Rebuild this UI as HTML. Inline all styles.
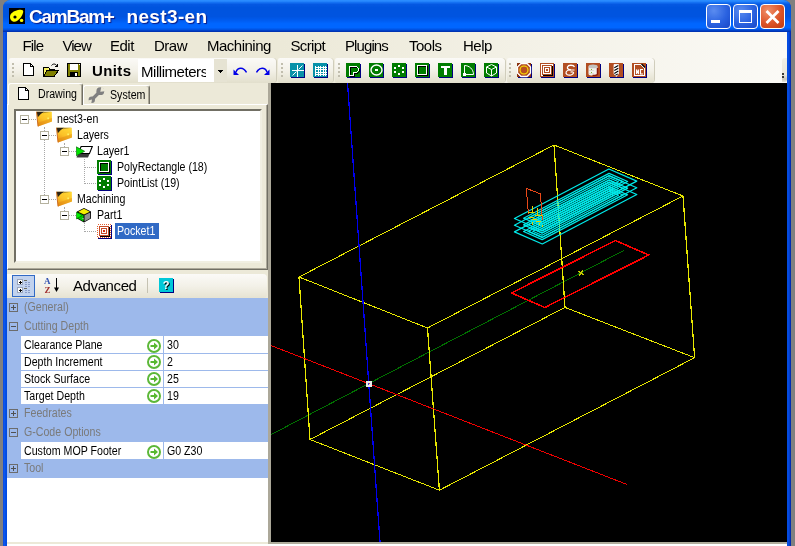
<!DOCTYPE html>
<html>
<head>
<meta charset="utf-8">
<title>CamBam+ nest3-en</title>
<style>
html,body{margin:0;padding:0;}
body{width:795px;height:546px;overflow:hidden;background:#808080;position:relative;font-family:"Liberation Sans",sans-serif;font-size:12px;color:#000;}
.abs{position:absolute;}
svg{display:block;}
#win{will-change:transform;position:absolute;left:3px;top:0;width:788px;height:546px;background:linear-gradient(to right,#0a3ad8 0,#0f5ff0 1px,#0650e6 2px,#0048e0 4px,#0048e0 784px,#0650e6 785px,#0440d0 786.500px,#0020a4 788px);border-radius:8px 8px 0 0;overflow:hidden;}
#title{position:absolute;left:0;top:0;width:788px;height:32px;
background:linear-gradient(to bottom,#2a8cff 0%,#2a8cff 3%,#1470f2 8%,#0558e2 14%,#0054de 24%,#0054e0 52%,#005cf0 64%,#0066ff 74%,#0066ff 86%,#0054e4 92%,#0038bc 97%,#002ea8 100%);}
.ttext{position:absolute;top:6px;color:#fff;font-weight:bold;font-size:19px;line-height:22px;white-space:pre;text-shadow:1px 1px 1px #0a1883;}
.cb{position:absolute;top:4px;width:25px;height:25px;border:1px solid #fff;border-radius:4px;box-sizing:border-box;background:radial-gradient(circle at 30% 25%,#5a8cf0 0%,#2a62e0 55%,#1848c8 100%);}
.cb.x{background:radial-gradient(circle at 30% 25%,#f0906a 0%,#dc5428 55%,#c03a10 100%);}
#client{position:absolute;left:4px;top:32px;width:780px;height:514px;background:#ece9d8;}
#menubar{position:absolute;left:0;top:0;width:780px;height:26px;background:linear-gradient(to right,#ece9d8 0%,#ece9d8 35%,#fbfaf6 100%);}
.mi{position:absolute;top:5px;font-size:15px;line-height:18px;letter-spacing:-0.5px;}
#tbpanel{position:absolute;left:0;top:26px;width:780px;height:25px;background:linear-gradient(to right,#ece9d8 0%,#ece9d8 35%,#fbfaf6 100%);}
.tb{position:absolute;top:0;height:25px;background:linear-gradient(to bottom,#fbfaf7 0%,#f3f1e8 50%,#e2dfcc 100%);border-radius:2px 4px 4px 2px;box-shadow:1px 0 0 #d0cdbc;}
.grip{position:absolute;top:5px;width:2px;height:16px;background:repeating-linear-gradient(to bottom,#c1beae 0,#c1beae 2px,transparent 2px,transparent 4px);}
#view{position:absolute;left:264px;top:51px;width:516px;height:459px;background:#000;overflow:hidden;}
#botline{position:absolute;left:261px;top:510px;width:519px;height:2px;background:#b0ad9c;}
#botwhite{position:absolute;left:0;top:512px;width:780px;height:2px;background:#fff;}
#split{position:absolute;left:261px;top:51px;width:3px;height:461px;background:#aca899;}
#left{position:absolute;left:0;top:51px;width:261px;height:463px;background:#ece9d8;}
/* tabs */
#tabpage{position:absolute;left:0;top:21px;width:261px;height:166px;box-sizing:border-box;border-top:1px solid #fff;border-left:1px solid #fff;border-right:1px solid #716f64;border-bottom:1px solid #716f64;box-shadow:inset -1px -1px 0 #aca899;}
.tab{position:absolute;box-sizing:border-box;border:1px solid #fff;border-right:1px solid #716f64;border-bottom:none;border-radius:3px 3px 0 0;background:#ece9d8;box-shadow:inset -1px 0 0 #aca899;}
#tree{position:absolute;left:7px;top:26px;width:248px;height:154px;box-sizing:border-box;background:#fff;border:2px solid;border-color:#716f64 #f1efe2 #f1efe2 #716f64;box-shadow:0 0 0 0 #000;}
.tt{position:absolute;height:16px;line-height:16px;white-space:nowrap;}
.ms{display:inline-block;transform:scaleX(.885);transform-origin:0 50%;white-space:nowrap;}
.ebox{position:absolute;width:9px;height:9px;}
.dv{position:absolute;width:0;border-left:1px dotted #a8a8a8;}
.dh{position:absolute;height:0;border-top:1px dotted #a8a8a8;}
/* property grid */
#pgbar{position:absolute;left:0;top:191px;width:260px;height:24px;background:linear-gradient(to bottom,#fbfaf7 0%,#f3f1e8 50%,#e6e3d2 100%);border-radius:0 4px 4px 0;}
#pg{position:absolute;left:0;top:215px;width:261px;height:244px;background:#fff;}
.cat{position:absolute;left:0;width:261px;background:#9db9eb;}
.cl{position:absolute;left:16.500px;top:0;height:19px;line-height:19px;color:#7a7a7a;white-space:nowrap;}
.pr{position:absolute;left:0;width:261px;height:17px;background:#9db9eb;}
.pn{position:absolute;left:14px;top:0;width:142px;height:16px;background:#fff;line-height:18px;padding-left:2.500px;box-sizing:border-box;white-space:nowrap;overflow:hidden;}
.pi{position:absolute;left:140px;top:1px;width:14px;height:14px;}
.pv{position:absolute;left:157px;top:0;width:104px;height:16px;background:#fff;line-height:18px;padding-left:3px;box-sizing:border-box;white-space:nowrap;}
</style>
</head>
<body>
<div id="win">
 <div id="title">
  <svg class="abs" style="left:6px;top:8px" width="16" height="16" viewBox="0 0 16 16"><rect width="16" height="16" fill="#000"/><path d="M1 9 C1 5 5 3 9 2 C13 1 15 2 14 5 C13 8 11 11 8 13 C5 15 1 13 1 9 Z" fill="#ffff00"/><circle cx="6" cy="9" r="1.600" fill="#000"/><circle cx="12.600" cy="12.400" r="1.700" fill="#ffff00"/></svg>
  <div class="ttext" style="left:26px;letter-spacing:-1.250px">CamBam+</div><div class="ttext" style="left:123.500px;letter-spacing:0.350px">nest3-en</div>
  <div class="cb" style="left:703px"><svg width="23" height="23" viewBox="0 0 23 23" shape-rendering="crispEdges"><rect x="4" y="15" width="9" height="3" fill="#fff"/></svg></div>
  <div class="cb" style="left:730px"><svg width="23" height="23" viewBox="0 0 23 23" shape-rendering="crispEdges"><path d="M5.500 6.500h12v11h-12z" fill="none" stroke="#fff" stroke-width="1"/><rect x="5" y="5" width="13" height="3" fill="#fff"/></svg></div>
  <div class="cb x" style="left:757px"><svg width="23" height="23" viewBox="0 0 23 23"><path d="M5.500 6l12 12M17.500 6l-12 12" stroke="#fff" stroke-width="2.800" fill="none"/></svg></div>
 </div>
 <div id="client">
  <div id="menubar">
   <span class="mi" style="left:15.500px;letter-spacing:-0.9px">File</span>
   <span class="mi" style="left:55.500px;letter-spacing:-1px">View</span>
   <span class="mi" style="left:103px">Edit</span>
   <span class="mi" style="left:147px">Draw</span>
   <span class="mi" style="left:200px">Machining</span>
   <span class="mi" style="left:283.500px;letter-spacing:-0.65px">Script</span>
   <span class="mi" style="left:338px;letter-spacing:-0.9px">Plugins</span>
   <span class="mi" style="left:402px">Tools</span>
   <span class="mi" style="left:456px">Help</span>
  </div>
  <div id="tbpanel"><div class="tb" style="left:2px;width:267px"></div><div class="tb" style="left:271px;width:55px"></div><div class="tb" style="left:328px;width:170px"></div><div class="tb" style="left:500px;width:147px"></div><div class="grip" style="left:5px"></div><div class="grip" style="left:274px"></div><div class="grip" style="left:331px"></div><div class="grip" style="left:502px"></div><div class="abs" style="left:16px;top:5px;line-height:0"><svg width="11" height="13" viewBox="0 0 11 13" shape-rendering="crispEdges" ><path d="M.5 .5h7l3 3v9h-10z" fill="#fff" stroke="#000"/><path d="M7.500 .500v3h3" fill="none" stroke="#000"/></svg></div><div class="abs" style="left:36px;top:5px;line-height:0"><svg width="16" height="14" viewBox="0 0 16 14" shape-rendering="crispEdges" ><path d="M.5 13.500v-9h5l1 1.500h5v2" fill="#ffff80" stroke="#000"/><path d="M1 5h4v1.500h6v1h-7.500l-2.500 5z" fill="#f8f060"/><path d="M.5 13.500l3.500-6h11.500l-4.500 6z" fill="#808000" stroke="#000"/><path d="M8.500 2.500c1.500-2 4-2 5.500.500" fill="none" stroke="#000" shape-rendering="auto"/><path d="M12 3.500h2.500v-2.500" fill="none" stroke="#000"/></svg></div><div class="abs" style="left:60px;top:5px;line-height:0"><svg width="14" height="14" viewBox="0 0 14 14" shape-rendering="crispEdges" ><rect x=".5" y=".5" width="13" height="13" fill="#808000" stroke="#000"/><rect x="3" y="1" width="8" height="6" fill="#fff"/><rect x="3" y="9" width="8" height="4" fill="#000"/><rect x="8" y="10" width="2" height="3" fill="#fff"/><rect x="12" y="1" width="1" height="1" fill="#fff"/></svg></div><div class="abs" style="left:85px;top:4px;font-size:15px;font-weight:bold;line-height:18px;letter-spacing:0.4px">Units</div><div class="abs" style="left:131px;top:1px;width:76px;height:23px;background:#fff;overflow:hidden"><div style="position:absolute;left:0;top:0;width:68px;height:23px;overflow:hidden"><div style="position:absolute;left:3px;top:4px;font-size:15px;line-height:18px;letter-spacing:-0.45px;white-space:nowrap">Millimeters</div></div></div><div class="abs" style="left:207px;top:1px;width:13px;height:23px;background:#e6e3d3"></div><svg class="abs" style="left:211px;top:12px" width="5" height="3" viewBox="0 0 5 3" shape-rendering="crispEdges"><rect x="0" y="0" width="5" height="1" fill="#000"/><rect x="1" y="1" width="3" height="1" fill="#000"/><rect x="2" y="2" width="1" height="1" fill="#000"/></svg><div class="abs" style="left:226px;top:8px;line-height:0"><svg width="14" height="10" viewBox="0 0 14 10" shape-rendering="crispEdges" ><path d="M3 6C5 1 10.500 1 13.500 6.500" fill="none" stroke="#0000e8" stroke-width="1.500" shape-rendering="auto"/><path d="M0.500 3.500v5.500h5.500z" fill="#0000e8" shape-rendering="auto"/></svg></div><div class="abs" style="left:249px;top:8px;line-height:0"><svg width="14" height="10" viewBox="0 0 14 10" shape-rendering="crispEdges" ><path d="M0.500 6.500C3.500 1 9 1 11 6" fill="none" stroke="#0000e8" stroke-width="1.500" shape-rendering="auto"/><path d="M13.500 3.500v5.500h-5.500z" fill="#0000e8" shape-rendering="auto"/></svg></div><div class="abs" style="left:283px;top:5px;line-height:0"><svg width="16" height="16" viewBox="0 0 16 16" shape-rendering="crispEdges" ><rect x="1" y="1" width="14" height="14" fill="#000080"/><rect x="0" y="0" width="14" height="14" fill="#0891a8"/><path d="M7 1v12M1 7h12" stroke="#fff" stroke-width="1" fill="none" transform="translate(.5,.5)"/><path d="M8 6l4-4M2 12l4-4" stroke="#fff" stroke-width="1" fill="none" shape-rendering="auto" transform="translate(.5,.5)"/></svg></div><div class="abs" style="left:306px;top:5px;line-height:0"><svg width="16" height="16" viewBox="0 0 16 16" shape-rendering="crispEdges" ><rect x="1" y="1" width="14" height="14" fill="#000080"/><rect x="0" y="0" width="14" height="14" fill="#0891a8"/><path d="M2 2v10M4.5 2v10M7 2v10M9.5 2v10M12 2v10M1 3.5h12M1 6h12M1 8.5h12M1 11h12" stroke="#fff" stroke-width="1" fill="none" transform="translate(.5,.5)"/></svg></div><div class="abs" style="left:339px;top:5px;line-height:0"><svg width="16" height="16" viewBox="0 0 16 16" shape-rendering="crispEdges" ><rect x="1" y="1" width="14" height="14" fill="#000080"/><rect x="0" y="0" width="14" height="14" fill="#007c00"/><path d="M4 4h7l2 2v2l-2 2h-3v3h-4z" fill="none" stroke="#000" stroke-width="1" transform="translate(.5,.5)"/><path d="M3 3h7l2 2v2l-2 2h-3v3h-4z" fill="none" stroke="#fff" stroke-width="1" transform="translate(.5,.5)"/></svg></div><div class="abs" style="left:362px;top:5px;line-height:0"><svg width="16" height="16" viewBox="0 0 16 16" shape-rendering="crispEdges" ><rect x="1" y="1" width="14" height="14" fill="#000080"/><rect x="0" y="0" width="14" height="14" fill="#007c00"/><ellipse cx="7.500" cy="7" rx="5.500" ry="5" fill="none" stroke="#fff" stroke-width="1.400" shape-rendering="auto"/><rect x="6" y="6" width="3" height="2" fill="#fff"/></svg></div><div class="abs" style="left:385px;top:5px;line-height:0"><svg width="16" height="16" viewBox="0 0 16 16" shape-rendering="crispEdges" ><rect x="1" y="1" width="14" height="14" fill="#000080"/><rect x="0" y="0" width="14" height="14" fill="#007c00"/><rect x="6" y="2" width="2" height="2" fill="#fff"/><rect x="6" y="10" width="2" height="2" fill="#fff"/><rect x="2" y="4" width="2" height="2" fill="#fff"/><rect x="2" y="8" width="2" height="2" fill="#fff"/><rect x="10" y="4" width="2" height="2" fill="#fff"/><rect x="10" y="8" width="2" height="2" fill="#fff"/></svg></div><div class="abs" style="left:408px;top:5px;line-height:0"><svg width="16" height="16" viewBox="0 0 16 16" shape-rendering="crispEdges" ><rect x="1" y="1" width="14" height="14" fill="#000080"/><rect x="0" y="0" width="14" height="14" fill="#007c00"/><rect x="3.5" y="3.5" width="9" height="9" fill="none" stroke="#000"/><rect x="2.5" y="2.5" width="9" height="9" fill="none" stroke="#fff"/></svg></div><div class="abs" style="left:431px;top:5px;line-height:0"><svg width="16" height="16" viewBox="0 0 16 16" shape-rendering="crispEdges" ><rect x="1" y="1" width="14" height="14" fill="#000080"/><rect x="0" y="0" width="14" height="14" fill="#007c00"/><path d="M3 3h9v2h-3v7h-3v-7h-3z" fill="#fff"/></svg></div><div class="abs" style="left:454px;top:5px;line-height:0"><svg width="16" height="16" viewBox="0 0 16 16" shape-rendering="crispEdges" ><rect x="1" y="1" width="14" height="14" fill="#000080"/><rect x="0" y="0" width="14" height="14" fill="#007c00"/><path d="M3.5 11.500V2.500 C8 2.500 12.500 6 12.500 11.500Z" fill="none" stroke="#fff" stroke-width="1" shape-rendering="auto"/><rect x="2" y="10" width="3" height="3" fill="#fff"/></svg></div><div class="abs" style="left:477px;top:5px;line-height:0"><svg width="16" height="16" viewBox="0 0 16 16" shape-rendering="crispEdges" ><rect x="1" y="1" width="14" height="14" fill="#000080"/><rect x="0" y="0" width="14" height="14" fill="#007c00"/><path d="M7.500 1.500l5 2.500v6l-5 3l-5-3v-6zM2.500 4l5 2.500l5-2.500M7.500 6.500v6.500" fill="none" stroke="#fff" stroke-width="1" shape-rendering="auto"/></svg></div><div class="abs" style="left:510px;top:5px;line-height:0"><svg width="16" height="16" viewBox="0 0 16 16" shape-rendering="crispEdges" ><rect x="1" y="1" width="14" height="14" fill="#000080"/><rect x="0" y="0" width="14" height="14" fill="#b24e22"/><path d="M4 0.500h6l3.500 3.500v6l-3.500 3.500h-6l-3.500-3.500v-6z" fill="none" stroke="#fff" stroke-width="1.300" shape-rendering="auto"/><path d="M0 0h3l-3 3zM14 0h-3l3 3zM0 14h3l-3-3zM14 14h-3l3-3z" fill="#8a3414"/><circle cx="7" cy="7" r="4" fill="#b85020" stroke="#ffe800" stroke-width="1.100" shape-rendering="auto"/></svg></div><div class="abs" style="left:533px;top:5px;line-height:0"><svg width="16" height="16" viewBox="0 0 16 16" shape-rendering="crispEdges" ><rect x="1" y="1" width="14" height="14" fill="#000080"/><rect x="0" y="0" width="14" height="14" fill="#fff"/><rect x="0.500" y="0.500" width="13" height="13" fill="none" stroke="#b24e22"/><rect x="2.500" y="2.500" width="9" height="9" fill="none" stroke="#b24e22"/><rect x="4.500" y="4.500" width="5" height="5" fill="none" stroke="#b24e22"/><rect x="6" y="6" width="2" height="2" fill="#b24e22"/><path d="M3 12.500h10M12.500 3v10" stroke="#000" fill="none"/></svg></div><div class="abs" style="left:556px;top:5px;line-height:0"><svg width="16" height="16" viewBox="0 0 16 16" shape-rendering="crispEdges" ><rect x="1" y="1" width="14" height="14" fill="#000080"/><rect x="0" y="0" width="14" height="14" fill="#b24e22"/><path d="M11.500 4C10.500 1.800 5.500 1.500 4.500 4C3.800 6 6 6.800 8 6.800" fill="none" stroke="#fff" stroke-width="1.300" shape-rendering="auto"/><path d="M11.500 7H7C3 7 2 10 4 11.500C6.500 13.200 10 11.500 10.500 10C10.800 9 9 8.500 7.500 9.200" fill="none" stroke="#fff" stroke-width="1.200" shape-rendering="auto"/></svg></div><div class="abs" style="left:579px;top:5px;line-height:0"><svg width="16" height="16" viewBox="0 0 16 16" shape-rendering="crispEdges" ><rect x="1" y="1" width="14" height="14" fill="#000080"/><rect x="0" y="0" width="14" height="14" fill="#b24e22"/><path d="M2.500 3.500v7.500c0 2 9 2 9 0v-7.500z" fill="#f2f2ee" shape-rendering="auto"/><ellipse cx="7" cy="3.400" rx="4.500" ry="1.900" fill="#c4c4c0" shape-rendering="auto"/><path d="M11.500 5v6c0 1.200-2.500 1.700-5 1.500" fill="none" stroke="#8a1a0c" stroke-width="1.500" shape-rendering="auto"/><rect x="5" y="6" width="1" height="1" fill="#80b030"/><rect x="5" y="9" width="1" height="1" fill="#80b030"/><path d="M3 7.500h5M3 10h5" stroke="#d0d0c8" stroke-width=".6"/></svg></div><div class="abs" style="left:602px;top:5px;line-height:0"><svg width="16" height="16" viewBox="0 0 16 16" shape-rendering="crispEdges" ><rect x="1" y="1" width="14" height="14" fill="#000080"/><rect x="0" y="0" width="14" height="14" fill="#b24e22"/><path d="M5 1.500h4.500v9l-2.250 3l-2.250-3z" fill="#fff" stroke="#fff" stroke-width=".8" shape-rendering="auto"/><path d="M5.300 4.800l4-2.300M5.300 7.600l4-2.300M5.300 10.400l4-2.300M6.300 12.400l2.500-1.500" stroke="#000" stroke-width="1.100" fill="none" shape-rendering="auto"/></svg></div><div class="abs" style="left:625px;top:5px;line-height:0"><svg width="16" height="16" viewBox="0 0 16 16" shape-rendering="crispEdges" ><rect x="1" y="1" width="14" height="14" fill="#000080"/><rect x="0" y="0" width="14" height="14" fill="#b24e22"/><path d="M2.500 1.500h6.500l3.500 3.500v7.500h-10z" fill="none" stroke="#fff" stroke-width="1"/><path d="M9.500 1l3.500 3.500" stroke="#000" stroke-width="1.300" shape-rendering="auto"/><path d="M4.500 11v-4.500l2 4.500v-4.500M11 6.500h-2.500v4.500h2.500" fill="none" stroke="#fff" stroke-width="1.100" shape-rendering="auto"/></svg></div><div class="abs" style="left:775px;top:0;width:5px;height:24px;border-radius:3px 0 2px 0;background:linear-gradient(to bottom,#f1efe5 0%,#e9e6da 70%,#c9c6ba 88%,#e6e3d8 100%)"></div><div class="abs" style="left:775px;top:15px;width:2px;height:2px;background:#000;border-radius:1px"></div><div class="abs" style="left:775px;top:18px;width:2px;height:2px;background:#000;border-radius:1px"></div></div>
  <div id="left">
   <div id="tabpage"></div>
   <div class="tab" style="left:1px;top:0;width:75px;height:22px"><div class="abs" style="left:9px;top:3px"><svg width="11" height="13" viewBox="0 0 11 13" shape-rendering="crispEdges" ><path d="M.5 .5h7l3 3v9h-10z" fill="#fff" stroke="#000"/><path d="M7.500 .500v3h3" fill="none" stroke="#000"/></svg></div><div class="abs" style="left:29px;top:2px;line-height:16px"><span class="ms">Drawing</span></div></div>
   <div class="tab" style="left:76px;top:2px;width:67px;height:19px"><div class="abs" style="left:4px;top:1px"><svg width="17" height="17" viewBox="0 0 17 17"><path d="M5 11.500L11.500 5" stroke="#808080" stroke-width="3.200" fill="none"/><circle cx="12.300" cy="4.200" r="3.900" fill="#808080"/><path d="M12.300 4.700l1.200-5.500l5 5z" fill="#ece9d8"/><circle cx="3.800" cy="12.700" r="3.200" fill="#808080"/><path d="M4 12.500l-4.500 1l3.500 3.800z" fill="#ece9d8"/></svg></div><div class="abs" style="left:26px;top:1px;line-height:16px"><span class="ms">System</span></div></div>
   <div id="tree"><div class="abs" style="left:-9px;top:-28px;width:0;height:0"><div class="dh" style="left:22px;top:36px;width:7px"></div><div class="dv" style="left:37px;top:44px;height:72px"></div><div class="dh" style="left:42px;top:52px;width:7px"></div><div class="dh" style="left:42px;top:116px;width:7px"></div><div class="dv" style="left:57px;top:60px;height:8px"></div><div class="dh" style="left:62px;top:68px;width:7px"></div><div class="dv" style="left:77px;top:76px;height:25px"></div><div class="dh" style="left:78px;top:84px;width:11px"></div><div class="dh" style="left:78px;top:100px;width:11px"></div><div class="dv" style="left:57px;top:124px;height:8px"></div><div class="dh" style="left:62px;top:132px;width:7px"></div><div class="dv" style="left:77px;top:140px;height:9px"></div><div class="dh" style="left:78px;top:148px;width:11px"></div><div class="ebox" style="left:13px;top:32px"><svg width="9" height="9" viewBox="0 0 9 9" shape-rendering="crispEdges"><rect x=".5" y=".5" width="8" height="8" fill="#fff" stroke="#b5b29f"/><rect x="2" y="4" width="5" height="1" fill="#000"/></svg></div><div class="abs" style="left:29px;top:28px;width:16px;height:16px"><svg width="17" height="16" viewBox="0 0 17 16"><defs><linearGradient id="fg1" x1="0.700" y1="0" x2="0.200" y2="1"><stop offset="0" stop-color="#ffd634"/><stop offset=".5" stop-color="#fcc228"/><stop offset="1" stop-color="#e68a14"/></linearGradient></defs><path d="M0.500 0.800l15.300 0l.200 9.600l-14 5z" fill="url(#fg1)"/><path d="M0.500 0.800h8l-3.500 2l-3.200 3.500z" fill="#2c2416"/><path d="M8.500 0.800h7l-8.500 1.500z" fill="#7a5a20" opacity=".6"/><path d="M2 11.800l13.900-4.800l.100 3.400l-14 5z" fill="#e08a14" opacity=".45"/><path d="M0.500 0.800l1.500 14.600" stroke="#c8641a" stroke-width=".9" fill="none"/><rect x="11.300" y="6.500" width="1.700" height="1.700" fill="#fff266"/></svg></div><div class="tt" style="left:50px;top:28px;color:#000"><span class="ms">nest3-en</span></div><div class="ebox" style="left:33px;top:48px"><svg width="9" height="9" viewBox="0 0 9 9" shape-rendering="crispEdges"><rect x=".5" y=".5" width="8" height="8" fill="#fff" stroke="#b5b29f"/><rect x="2" y="4" width="5" height="1" fill="#000"/></svg></div><div class="abs" style="left:49px;top:44px;width:16px;height:16px"><svg width="17" height="16" viewBox="0 0 17 16"><defs><linearGradient id="fg2" x1="0.700" y1="0" x2="0.200" y2="1"><stop offset="0" stop-color="#ffd634"/><stop offset=".5" stop-color="#fcc228"/><stop offset="1" stop-color="#e68a14"/></linearGradient></defs><path d="M0.500 0.800l15.300 0l.200 9.600l-14 5z" fill="url(#fg2)"/><path d="M0.500 0.800h8l-3.500 2l-3.200 3.500z" fill="#2c2416"/><path d="M8.500 0.800h7l-8.500 1.500z" fill="#7a5a20" opacity=".6"/><path d="M2 11.800l13.900-4.800l.100 3.400l-14 5z" fill="#e08a14" opacity=".45"/><path d="M0.500 0.800l1.500 14.600" stroke="#c8641a" stroke-width=".9" fill="none"/><rect x="11.300" y="6.500" width="1.700" height="1.700" fill="#fff266"/></svg></div><div class="tt" style="left:70px;top:44px;color:#000"><span class="ms">Layers</span></div><div class="ebox" style="left:53px;top:64px"><svg width="9" height="9" viewBox="0 0 9 9" shape-rendering="crispEdges"><rect x=".5" y=".5" width="8" height="8" fill="#fff" stroke="#b5b29f"/><rect x="2" y="4" width="5" height="1" fill="#000"/></svg></div><div class="abs" style="left:69px;top:60px;width:16px;height:16px"><svg width="17" height="16" viewBox="0 0 17 16"><path d="M2 11h11.500l-1.500 3.500h-11.500z" fill="#3a3a3a"/><path d="M2.300 10.500h11.200l2.800-7h-11.200z" fill="#fff" stroke="#000" stroke-width="1.100"/><path d="M0.300 3.800v9l8.400-4.500z" fill="#00e400" stroke="#005800" stroke-width=".6"/></svg></div><div class="tt" style="left:90px;top:60px;color:#000"><span class="ms">Layer1</span></div><div class="abs" style="left:90px;top:77px;width:16px;height:16px"><svg width="16" height="16" viewBox="0 0 16 16" shape-rendering="crispEdges" ><rect x="1" y="1" width="14" height="14" fill="#000080"/><rect x="0" y="0" width="14" height="14" fill="#007c00"/><rect x="3.5" y="3.5" width="9" height="9" fill="none" stroke="#000"/><rect x="2.5" y="2.5" width="9" height="9" fill="none" stroke="#fff"/></svg></div><div class="tt" style="left:110px;top:76px;color:#000"><span class="ms">PolyRectangle (18)</span></div><div class="abs" style="left:90px;top:93px;width:16px;height:16px"><svg width="16" height="16" viewBox="0 0 16 16" shape-rendering="crispEdges" ><rect x="1" y="1" width="14" height="14" fill="#000080"/><rect x="0" y="0" width="14" height="14" fill="#007c00"/><rect x="6" y="2" width="2" height="2" fill="#fff"/><rect x="6" y="10" width="2" height="2" fill="#fff"/><rect x="2" y="4" width="2" height="2" fill="#fff"/><rect x="2" y="8" width="2" height="2" fill="#fff"/><rect x="10" y="4" width="2" height="2" fill="#fff"/><rect x="10" y="8" width="2" height="2" fill="#fff"/></svg></div><div class="tt" style="left:110px;top:92px;color:#000"><span class="ms">PointList (19)</span></div><div class="ebox" style="left:33px;top:112px"><svg width="9" height="9" viewBox="0 0 9 9" shape-rendering="crispEdges"><rect x=".5" y=".5" width="8" height="8" fill="#fff" stroke="#b5b29f"/><rect x="2" y="4" width="5" height="1" fill="#000"/></svg></div><div class="abs" style="left:49px;top:108px;width:16px;height:16px"><svg width="17" height="16" viewBox="0 0 17 16"><defs><linearGradient id="fg3" x1="0.700" y1="0" x2="0.200" y2="1"><stop offset="0" stop-color="#ffd634"/><stop offset=".5" stop-color="#fcc228"/><stop offset="1" stop-color="#e68a14"/></linearGradient></defs><path d="M0.500 0.800l15.300 0l.200 9.600l-14 5z" fill="url(#fg3)"/><path d="M0.500 0.800h8l-3.500 2l-3.200 3.500z" fill="#2c2416"/><path d="M8.500 0.800h7l-8.500 1.500z" fill="#7a5a20" opacity=".6"/><path d="M2 11.800l13.900-4.800l.100 3.400l-14 5z" fill="#e08a14" opacity=".45"/><path d="M0.500 0.800l1.500 14.600" stroke="#c8641a" stroke-width=".9" fill="none"/><rect x="11.300" y="6.500" width="1.700" height="1.700" fill="#fff266"/></svg></div><div class="tt" style="left:70px;top:108px;color:#000"><span class="ms">Machining</span></div><div class="ebox" style="left:53px;top:128px"><svg width="9" height="9" viewBox="0 0 9 9" shape-rendering="crispEdges"><rect x=".5" y=".5" width="8" height="8" fill="#fff" stroke="#b5b29f"/><rect x="2" y="4" width="5" height="1" fill="#000"/></svg></div><div class="abs" style="left:69px;top:124px;width:16px;height:16px"><svg width="16" height="16" viewBox="0 0 16 16"><path d="M8 1l7 3.500v7l-7 4l-7-4v-7z" fill="#000"/><path d="M8 1.800l5.800 2.900l-5.800 2.700l-5.800-2.700z" fill="#f4f000"/><path d="M1.800 5.600l5.700 2.700v6.200l-5.700-3.300z" fill="#00c800"/><path d="M14.200 5.600l-5.700 2.700v6.200l5.700-3.300z" fill="#909090"/><path d="M0.300 5v7l6-3.600z" fill="#00f000" stroke="#004000" stroke-width=".5"/><path d="M6 11.500l1.500 1v-1.500z" fill="#d8d8d8"/></svg></div><div class="tt" style="left:90px;top:124px;color:#000"><span class="ms">Part1</span></div><div class="abs" style="left:90px;top:141px;width:16px;height:16px"><svg width="16" height="16" viewBox="0 0 16 16" shape-rendering="crispEdges" ><rect x="1" y="1" width="14" height="14" fill="#000080"/><rect x="0" y="0" width="14" height="14" fill="#fff"/><rect x="0.500" y="0.500" width="13" height="13" fill="none" stroke="#e06030" stroke-dasharray="1 1"/><rect x="2.500" y="2.500" width="9" height="9" fill="none" stroke="#c84c28"/><rect x="4.500" y="4.500" width="5" height="5" fill="none" stroke="#c84c28"/><rect x="6" y="6" width="2" height="2" fill="#d83010"/><path d="M3 12.500h10M12.500 3v10" stroke="#000" fill="none"/></svg></div><div class="abs" style="left:108px;top:140px;width:44px;height:16px;background:#316ac5"></div><div class="tt" style="left:110px;top:140px;color:#fff"><span class="ms">Pocket1</span></div></div></div>
   <div id="pgbar">
     <div class="abs" style="left:5px;top:1px;width:23px;height:22px;box-sizing:border-box;border:1px solid #316ac5;background:#c1d2ee"><div class="abs" style="left:4px;top:3px"><svg width="14" height="15" viewBox="0 0 14 15" shape-rendering="crispEdges" ><rect x=".5" y=".5" width="5" height="5" fill="#fff" stroke="#9aa6bc"/><rect x="2" y="3" width="3" height="1" fill="#000"/><rect x="3" y="2" width="1" height="3" fill="#000"/><rect x=".5" y="8.500" width="5" height="5" fill="#fff" stroke="#9aa6bc"/><rect x="2" y="11" width="3" height="1" fill="#000"/><rect x="3" y="10" width="1" height="3" fill="#000"/><path d="M7 1.500h3M7 9.500h3" stroke="#6a6a5a" fill="none"/><path d="M8 3.500h2M11 3.500h2M8 5.500h2M11 5.500h2M8 7.500h2M11 7.500h2M8 11.500h2M11 11.500h2M8 13.500h2M11 13.500h2" stroke="#8a9cc8" fill="none"/></svg></div></div>
     <div class="abs" style="left:37px;top:3px"><svg width="17" height="16" viewBox="0 0 17 16"><text x="0" y="7" font-family="Liberation Serif,serif" font-weight="bold" font-size="9" fill="#3050b0">A</text><text x="0.500" y="15.500" font-family="Liberation Serif,serif" font-weight="bold" font-size="9" fill="#a03030">Z</text><path d="M12.500 0.500v12" stroke="#000" stroke-width="1" shape-rendering="crispEdges"/><path d="M10 10.500h5l-2.500 4.500z" fill="#000"/></svg></div>
     <div class="abs" style="left:66px;top:3px;font-size:15px;line-height:18px;letter-spacing:-0.4px">Advanced</div>
     <div class="abs" style="left:140px;top:4px;width:1px;height:15px;background:#c5c2b2"></div>
     <div class="abs" style="left:152px;top:4px"><svg width="16" height="16" viewBox="0 0 16 16" shape-rendering="crispEdges" ><rect x="1" y="1" width="14" height="14" fill="#000080"/><rect x="0" y="0" width="14" height="14" fill="#00c8d8"/><text x="4.800" y="11.800" font-family="Liberation Sans,sans-serif" font-weight="bold" font-size="11" fill="#000" shape-rendering="auto">?</text><text x="3.800" y="10.800" font-family="Liberation Sans,sans-serif" font-weight="bold" font-size="11" fill="#fff" shape-rendering="auto">?</text></svg></div>
   </div>
   <div id="pg"><div class="cat" style="top:0px;height:19px"><svg class="abs" style="left:2px;top:5px" width="9" height="9" viewBox="0 0 9 9" shape-rendering="crispEdges"><rect x=".5" y=".5" width="8" height="8" fill="none" stroke="#6c6c6c"/><rect x="2" y="4" width="5" height="1" fill="#505050"/><rect x="4" y="2" width="1" height="5" fill="#505050"/></svg><div class="cl"><span class="ms">(General)</span></div></div><div class="cat" style="top:19px;height:19px"><svg class="abs" style="left:2px;top:5px" width="9" height="9" viewBox="0 0 9 9" shape-rendering="crispEdges"><rect x=".5" y=".5" width="8" height="8" fill="none" stroke="#6c6c6c"/><rect x="2" y="4" width="5" height="1" fill="#505050"/></svg><div class="cl"><span class="ms">Cutting Depth</span></div></div><div class="pr" style="top:38px;height:18px"><div class="pn" style="height:17px;line-height:18px"><span class="ms">Clearance Plane</span></div><div class="pi" style="top:3px"><svg width="14" height="14" viewBox="0 0 14 14"><circle cx="7" cy="7" r="6" fill="#fff" stroke="#5cb838" stroke-width="2"/><path d="M3.500 6h3.500v-2.500l4 3.500l-4 3.500v-2.500h-3.500z" fill="#58b830"/></svg></div><div class="pv" style="height:17px;line-height:18px"><span class="ms">30</span></div></div><div class="pr" style="top:56px;height:17px"><div class="pn" style="height:16px;line-height:16px"><span class="ms">Depth Increment</span></div><div class="pi" style="top:1px"><svg width="14" height="14" viewBox="0 0 14 14"><circle cx="7" cy="7" r="6" fill="#fff" stroke="#5cb838" stroke-width="2"/><path d="M3.500 6h3.500v-2.500l4 3.500l-4 3.500v-2.500h-3.500z" fill="#58b830"/></svg></div><div class="pv" style="height:16px;line-height:16px"><span class="ms">2</span></div></div><div class="pr" style="top:73px;height:17px"><div class="pn" style="height:16px;line-height:16px"><span class="ms">Stock Surface</span></div><div class="pi" style="top:1px"><svg width="14" height="14" viewBox="0 0 14 14"><circle cx="7" cy="7" r="6" fill="#fff" stroke="#5cb838" stroke-width="2"/><path d="M3.500 6h3.500v-2.500l4 3.500l-4 3.500v-2.500h-3.500z" fill="#58b830"/></svg></div><div class="pv" style="height:16px;line-height:16px"><span class="ms">25</span></div></div><div class="pr" style="top:90px;height:17px"><div class="pn" style="height:16px;line-height:16px"><span class="ms">Target Depth</span></div><div class="pi" style="top:1px"><svg width="14" height="14" viewBox="0 0 14 14"><circle cx="7" cy="7" r="6" fill="#fff" stroke="#5cb838" stroke-width="2"/><path d="M3.500 6h3.500v-2.500l4 3.500l-4 3.500v-2.500h-3.500z" fill="#58b830"/></svg></div><div class="pv" style="height:16px;line-height:16px"><span class="ms">19</span></div></div><div class="cat" style="top:106px;height:19px"><svg class="abs" style="left:2px;top:5px" width="9" height="9" viewBox="0 0 9 9" shape-rendering="crispEdges"><rect x=".5" y=".5" width="8" height="8" fill="none" stroke="#6c6c6c"/><rect x="2" y="4" width="5" height="1" fill="#505050"/><rect x="4" y="2" width="1" height="5" fill="#505050"/></svg><div class="cl"><span class="ms">Feedrates</span></div></div><div class="cat" style="top:125px;height:19px"><svg class="abs" style="left:2px;top:5px" width="9" height="9" viewBox="0 0 9 9" shape-rendering="crispEdges"><rect x=".5" y=".5" width="8" height="8" fill="none" stroke="#6c6c6c"/><rect x="2" y="4" width="5" height="1" fill="#505050"/></svg><div class="cl"><span class="ms">G-Code Options</span></div></div><div class="pr" style="top:144px;height:18px"><div class="pn" style="height:17px;line-height:18px"><span class="ms">Custom MOP Footer</span></div><div class="pi" style="top:3px"><svg width="14" height="14" viewBox="0 0 14 14"><circle cx="7" cy="7" r="6" fill="#fff" stroke="#5cb838" stroke-width="2"/><path d="M3.500 6h3.500v-2.500l4 3.500l-4 3.500v-2.500h-3.500z" fill="#58b830"/></svg></div><div class="pv" style="height:17px;line-height:18px"><span class="ms">G0 Z30</span></div></div><div class="cat" style="top:161px;height:19px"><svg class="abs" style="left:2px;top:5px" width="9" height="9" viewBox="0 0 9 9" shape-rendering="crispEdges"><rect x=".5" y=".5" width="8" height="8" fill="none" stroke="#6c6c6c"/><rect x="2" y="4" width="5" height="1" fill="#505050"/><rect x="4" y="2" width="1" height="5" fill="#505050"/></svg><div class="cl"><span class="ms">Tool</span></div></div></div>
  </div>
  <div id="split"></div>
  <div id="view"><svg width="516" height="459" viewBox="0 0 516 459" shape-rendering="crispEdges" style="position:absolute;left:0;top:0"><line x1="0.0" y1="351.6" x2="353.0" y2="167.3" stroke="#007000" stroke-width="1" /><path d="M28.000 194.000 L156.500 245.000 L412.000 113.000 L283.000 62.000 Z" fill="none" stroke="#e8e800" stroke-width="1" /><path d="M39.000 356.500 L168.400 407.200 L423.600 274.700 L294.000 224.400 Z" fill="none" stroke="#e8e800" stroke-width="1" /><line x1="28.0" y1="194.0" x2="39.0" y2="356.5" stroke="#e8e800" stroke-width="1.25" /><line x1="156.5" y1="245.0" x2="168.4" y2="407.2" stroke="#e8e800" stroke-width="1.25" /><line x1="283.0" y1="62.0" x2="294.0" y2="224.4" stroke="#e8e800" stroke-width="1.25" /><line x1="412.0" y1="113.0" x2="423.6" y2="274.7" stroke="#e8e800" stroke-width="1.25" /><line x1="0.0" y1="262.5" x2="356.3" y2="401.6" stroke="#f00000" stroke-width="1" /><line x1="76.5" y1="0.0" x2="109.0" y2="459.0" stroke="#0000f0" stroke-width="1.25" /><rect x="95" y="298" width="6" height="6" fill="#e8e8e8"/><rect x="97" y="300" width="2" height="1" fill="#d04040"/><rect x="97" y="300" width="1" height="2" fill="#4040d0"/><path d="M344.400 157.500 L377.700 172.000 L273.800 224.500 L240.500 210.000 Z" fill="none" stroke="#ff0000" stroke-width="1.6" /><line x1="307.0" y1="188.0" x2="313.0" y2="192.0" stroke="#c8c800" stroke-width="1" /><line x1="308.0" y1="193.0" x2="312.0" y2="187.0" stroke="#c8c800" stroke-width="1" /><path d="M243.400 148.900 L337.900 99.400 L365.800 111.500 L271.300 161.000 Z" fill="none" stroke="#00eaea" stroke-width="1.2" shape-rendering="geometricPrecision" stroke-linejoin="round"/><path d="M252.579 148.563 L338.061 103.787 L356.621 111.837 L271.139 156.613 Z" fill="none" stroke="#00eaea" stroke-width="1.2" shape-rendering="geometricPrecision" stroke-linejoin="round"/><path d="M257.159 148.395 L338.141 105.976 L352.041 112.005 L271.059 154.424 Z" fill="none" stroke="#00eaea" stroke-width="1.2" shape-rendering="geometricPrecision" stroke-linejoin="round"/><path d="M261.739 148.228 L338.221 108.165 L347.461 112.172 L270.979 152.235 Z" fill="none" stroke="#00eaea" stroke-width="1.2" shape-rendering="geometricPrecision" stroke-linejoin="round"/><path d="M266.338 148.059 L338.302 110.363 L342.862 112.341 L270.898 150.037 Z" fill="none" stroke="#00eaea" stroke-width="1.2" shape-rendering="geometricPrecision" stroke-linejoin="round"/><path d="M270.629 147.902 L338.377 112.415 L338.571 112.498 L270.823 147.985 Z" fill="none" stroke="#00eaea" stroke-width="1.2" shape-rendering="geometricPrecision" stroke-linejoin="round"/><path d="M243.400 142.200 L337.900 92.700 L365.800 104.800 L271.300 154.300 Z" fill="none" stroke="#00eaea" stroke-width="1.2" shape-rendering="geometricPrecision" stroke-linejoin="round"/><path d="M252.579 141.863 L338.061 97.087 L356.621 105.137 L271.139 149.913 Z" fill="none" stroke="#00eaea" stroke-width="1.2" shape-rendering="geometricPrecision" stroke-linejoin="round"/><path d="M257.159 141.695 L338.141 99.276 L352.041 105.305 L271.059 147.724 Z" fill="none" stroke="#00eaea" stroke-width="1.2" shape-rendering="geometricPrecision" stroke-linejoin="round"/><path d="M261.739 141.528 L338.221 101.465 L347.461 105.472 L270.979 145.535 Z" fill="none" stroke="#00eaea" stroke-width="1.2" shape-rendering="geometricPrecision" stroke-linejoin="round"/><path d="M266.338 141.359 L338.302 103.663 L342.862 105.641 L270.898 143.337 Z" fill="none" stroke="#00eaea" stroke-width="1.2" shape-rendering="geometricPrecision" stroke-linejoin="round"/><path d="M270.629 141.202 L338.377 105.715 L338.571 105.798 L270.823 141.285 Z" fill="none" stroke="#00eaea" stroke-width="1.2" shape-rendering="geometricPrecision" stroke-linejoin="round"/><path d="M243.400 135.500 L337.900 86.000 L365.800 98.100 L271.300 147.600 Z" fill="none" stroke="#00eaea" stroke-width="1.2" shape-rendering="geometricPrecision" stroke-linejoin="round"/><path d="M252.579 135.163 L338.061 90.387 L356.621 98.437 L271.139 143.213 Z" fill="none" stroke="#00eaea" stroke-width="1.2" shape-rendering="geometricPrecision" stroke-linejoin="round"/><path d="M257.159 134.995 L338.141 92.576 L352.041 98.605 L271.059 141.024 Z" fill="none" stroke="#00eaea" stroke-width="1.2" shape-rendering="geometricPrecision" stroke-linejoin="round"/><path d="M261.739 134.828 L338.221 94.765 L347.461 98.772 L270.979 138.835 Z" fill="none" stroke="#00eaea" stroke-width="1.2" shape-rendering="geometricPrecision" stroke-linejoin="round"/><path d="M266.338 134.659 L338.302 96.963 L342.862 98.941 L270.898 136.637 Z" fill="none" stroke="#00eaea" stroke-width="1.2" shape-rendering="geometricPrecision" stroke-linejoin="round"/><path d="M270.629 134.502 L338.377 99.015 L338.571 99.098 L270.823 134.585 Z" fill="none" stroke="#00eaea" stroke-width="1.2" shape-rendering="geometricPrecision" stroke-linejoin="round"/><path d="M257.400 131.000 L255.300 105.300 L269.400 110.900 L271.300 137.000" fill="none" stroke="#e84818" stroke-width="1" /><line x1="261.5" y1="123.0" x2="261.5" y2="130.0" stroke="#e0d000" stroke-width="1.5" /><line x1="257.0" y1="129.5" x2="264.0" y2="129.5" stroke="#e0d000" stroke-width="1.5" /><line x1="266.5" y1="125.0" x2="266.5" y2="133.0" stroke="#e0d000" stroke-width="1.5" /><line x1="264.0" y1="132.5" x2="272.0" y2="132.5" stroke="#e0d000" stroke-width="1.5" /><line x1="257.5" y1="134.5" x2="263.0" y2="134.5" stroke="#e0d000" stroke-width="1.5" /><line x1="261.0" y1="136.5" x2="266.0" y2="136.5" stroke="#e0d000" stroke-width="1.5" /><line x1="265.0" y1="138.5" x2="270.0" y2="138.5" stroke="#e0d000" stroke-width="1.5" /><line x1="261.5" y1="139.0" x2="261.5" y2="142.0" stroke="#e0d000" stroke-width="1.5" /><line x1="267.5" y1="141.0" x2="269.0" y2="141.0" stroke="#e0d000" stroke-width="1.5" /><line x1="270.5" y1="143.0" x2="271.5" y2="143.0" stroke="#e0d000" stroke-width="1.5" /></svg></div>
  <div id="botline"></div>
  <div id="botwhite"></div>
 </div>
</div>
</body>
</html>
